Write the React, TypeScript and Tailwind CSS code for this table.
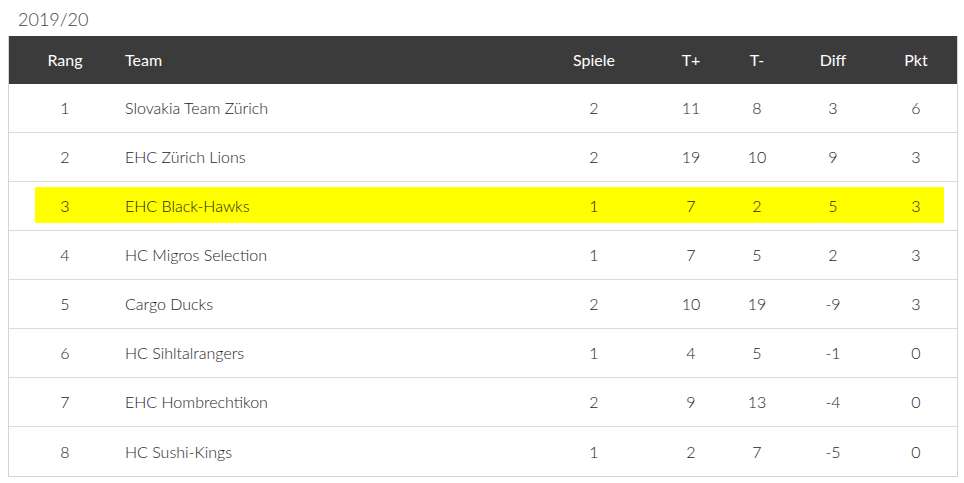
import React from "react";

type Row = {
  rang: number;
  team: string;
  spiele: number;
  plus: number;
  minus: number;
  diff: number;
  pkt: number;
  highlight?: boolean;
};

const rows: Row[] = [
  { rang: 1, team: "Slovakia Team Zürich", spiele: 2, plus: 11, minus: 8, diff: 3, pkt: 6 },
  { rang: 2, team: "EHC Zürich Lions", spiele: 2, plus: 19, minus: 10, diff: 9, pkt: 3 },
  { rang: 3, team: "EHC Black-Hawks", spiele: 1, plus: 7, minus: 2, diff: 5, pkt: 3, highlight: true },
  { rang: 4, team: "HC Migros Selection", spiele: 1, plus: 7, minus: 5, diff: 2, pkt: 3 },
  { rang: 5, team: "Cargo Ducks", spiele: 2, plus: 10, minus: 19, diff: -9, pkt: 3 },
  { rang: 6, team: "HC Sihltalrangers", spiele: 1, plus: 4, minus: 5, diff: -1, pkt: 0 },
  { rang: 7, team: "EHC Hombrechtikon", spiele: 2, plus: 9, minus: 13, diff: -4, pkt: 0 },
  { rang: 8, team: "HC Sushi-Kings", spiele: 1, plus: 2, minus: 7, diff: -5, pkt: 0 },
];

const cols = "grid grid-cols-[112px_408px_130px_64px_68px_84px_82px]";

export default function App() {
  return (
    <div className="min-h-screen bg-white font-['Lato',sans-serif] text-[16px] font-light">
      <div className="h-9 pl-[18px] pt-[7px] text-[18px] leading-6 text-[#444]">2019/20</div>
      <div className="ml-2 w-[950px] border border-t-0 border-[#d4d4d4]">
        <div className={`${cols} h-12 items-center bg-[#3b3b3b] font-normal text-white`}>
          <div className="text-center">Rang</div>
          <div className="pl-1">Team</div>
          <div className="text-center">Spiele</div>
          <div className="text-center">T+</div>
          <div className="text-center">T-</div>
          <div className="text-center">Diff</div>
          <div className="text-center">Pkt</div>
        </div>
        {rows.map((r, i) => (
          <div
            key={r.rang}
            className={`${cols} h-[49px] items-center text-[#1e1e1e] ${i < rows.length - 1 ? "border-b border-[#dcdcdc]" : ""}`}
          >
            {r.highlight && (
              <div className="col-span-full col-start-1 row-start-1 ml-[26px] mr-[13px] mt-[5px] mb-[7px] self-stretch bg-[#ffff00]" />
            )}
            <div className="col-start-1 row-start-1 text-center">{r.rang}</div>
            <div className="col-start-2 row-start-1 pl-1">{r.team}</div>
            <div className="col-start-3 row-start-1 text-center">{r.spiele}</div>
            <div className="col-start-4 row-start-1 text-center">{r.plus}</div>
            <div className="col-start-5 row-start-1 text-center">{r.minus}</div>
            <div className="col-start-6 row-start-1 text-center">{r.diff}</div>
            <div className="col-start-7 row-start-1 text-center">{r.pkt}</div>
          </div>
        ))}
      </div>
    </div>
  );
}
